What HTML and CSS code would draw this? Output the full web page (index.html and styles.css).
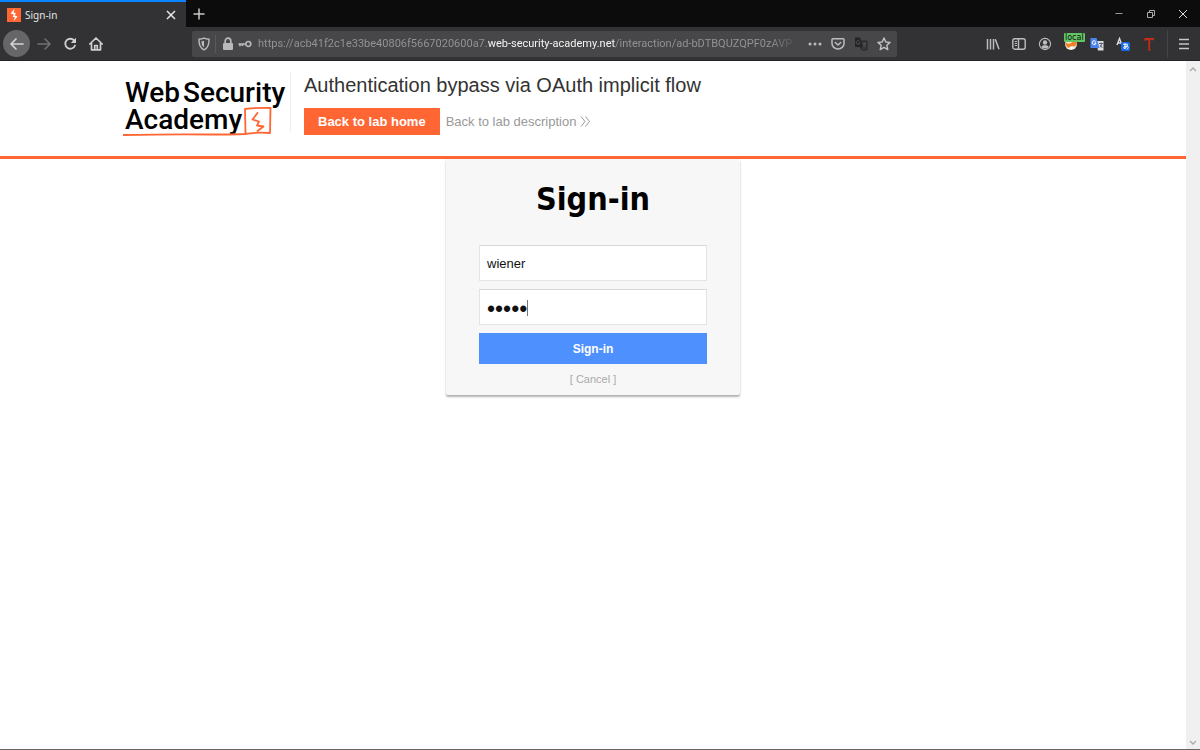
FILE: index.html
```html
<!DOCTYPE html>
<html lang="en">
<head>
<meta charset="utf-8">
<title>Sign-in</title>
<link rel="stylesheet" href="styles.css">
</head>
<body>
<div class="tabstrip">
  <div class="tab">
    <svg class="favicon" width="14" height="14" viewBox="0 0 14 14"><rect width="14" height="14" fill="#ff6633"/><path d="M7.6 0.5 L3.6 5.5 L6.8 6.5 L5.6 9 L8 9.2 L6.4 13.5 L10.6 8.4 L7.8 7.4 L8.8 5 L6.6 4.6 Z" fill="#fff"/></svg>
    <span class="tab-title">Sign-in</span>
    <button class="plain" aria-label="Close tab"><svg width="10" height="10" viewBox="0 0 10 10"><path d="M1 1 L9 9 M9 1 L1 9" stroke="#e8e8e8" stroke-width="1.5"/></svg></button>
  </div>
  <button class="plain new-tab" aria-label="New tab"><svg width="12" height="12" viewBox="0 0 12 12"><path d="M6 0.5V11.5M0.5 6H11.5" stroke="#c8c8c8" stroke-width="1.5"/></svg></button>
  <div class="window-buttons">
    <button class="plain" aria-label="Minimize"><svg width="10" height="10" viewBox="0 0 10 10"><path d="M1.500 4.500H8.500" stroke="#999"/></svg></button>
    <button class="plain" aria-label="Restore"><svg width="10" height="10" viewBox="0 0 10 10" fill="none" stroke="#aaa"><path d="M1.500 3.500H6.500V8.500H1.500ZM3.500 3.500V1.500H8.500V6.500H6.500"/></svg></button>
    <button class="plain" aria-label="Close"><svg width="10" height="10" viewBox="0 0 10 10"><path d="M1 1 L9 9 M9 1 L1 9" stroke="#ddd"/></svg></button>
  </div>
</div>

<div class="toolbar">
  <div class="nav">
    <button class="plain back" aria-label="Back"><svg width="16" height="14" viewBox="0 0 16 14" fill="none" stroke="#d4d4d5" stroke-width="1.700" stroke-linecap="round" stroke-linejoin="round"><path d="M14 7H2M7 2L2 7L7 12"/></svg></button>
    <button class="plain" aria-label="Forward"><svg width="16" height="14" viewBox="0 0 16 14" fill="none" stroke="#717173" stroke-width="1.500" stroke-linecap="round" stroke-linejoin="round"><path d="M2 7H14M9 2L14 7L9 12"/></svg></button>
    <button class="plain" aria-label="Reload"><svg width="16" height="16" viewBox="0 0 16 16"><path d="M12.500 5A5 5 0 1 0 13 9.500" fill="none" stroke="#cfcfd0" stroke-width="1.800" stroke-linecap="round"/><path d="M14 1.800V7H8.800Z" fill="#cfcfd0"/></svg></button>
    <button class="plain" aria-label="Home"><svg width="16" height="16" viewBox="0 0 16 16" fill="none" stroke="#cfcfd0" stroke-width="1.700" stroke-linejoin="round" stroke-linecap="round"><path d="M1.800 8L8 2L14.200 8M3.500 7V13.800H12.500V7M6.700 13.500V9.500H9.300V13.500"/></svg></button>
  </div>
  <div class="address">
    <svg width="14" height="14" viewBox="0 0 14 14"><path d="M7 1.200C8.800 2 10.500 2.200 12 2.200C12.200 7 11.300 10.800 7 12.800C2.700 10.800 1.800 7 2 2.200C3.500 2.200 5.200 2 7 1.200Z" fill="none" stroke="#bdbdbe" stroke-width="1.400"/><path d="M7 3.700V10.300C5 9 4.400 7.200 4.400 4.300C5.400 4.200 6.200 4 7 3.700Z" fill="#bdbdbe"/></svg>
    <span class="divider"></span>
    <svg width="12" height="14" viewBox="0 0 12 14"><rect x="1" y="6" width="10" height="7" rx="1" fill="#b9b9ba"/><path d="M3.200 6.500V4A2.800 2.800 0 0 1 8.800 4V6.500" fill="none" stroke="#b9b9ba" stroke-width="1.700"/></svg>
    <svg class="key" width="14" height="8" viewBox="0 0 14 8" fill="none" stroke="#b9b9ba" stroke-width="1.700"><circle cx="10.300" cy="4" r="2.500"/><path d="M8 4H0.500M2 4V6.300M4.500 4V6"/></svg>
    <div class="url" role="textbox" aria-label="Address">https://acb41f2c1e33be40806f5667020600a7.<span class="domain">web-security-academy.net</span>/interaction/ad-bDTBQUZQPF0zAVP</div>
    <button class="plain" aria-label="Page actions"><svg width="14" height="14" viewBox="0 0 14 14" fill="#bbb"><circle cx="2" cy="7" r="1.500"/><circle cx="7" cy="7" r="1.500"/><circle cx="12" cy="7" r="1.500"/></svg></button>
    <button class="plain" aria-label="Save to Pocket"><svg width="14" height="14" viewBox="0 0 14 14" fill="none" stroke="#bdbdbe" stroke-width="1.500" stroke-linecap="round" stroke-linejoin="round"><path d="M1.800 1.800H12.200Q13 1.800 13 2.600V6.500A6 5.500 0 0 1 1 6.500V2.600Q1 1.800 1.800 1.800ZM4.300 5.500L7 8L9.700 5.500"/></svg></button>
    <button class="plain" aria-label="Translate page"><svg width="14" height="14" viewBox="0 0 14 14"><path d="M1 0.500H6L9 10H1Z" fill="#242426"/><path d="M6.800 4H13V13H8L6 10H9Z" fill="#39393b" stroke="#29292b"/><path d="M5.600 4.300A1.900 1.900 0 1 0 6 6H4.200M8.500 6.500H12M10.300 5.500V6.500M11.300 6.500Q10.500 9 8.900 9.800M9 7.500L11.700 10" fill="none" stroke="#555558" stroke-width="0.800"/></svg></button>
    <button class="plain" aria-label="Bookmark"><svg width="14" height="14" viewBox="0 0 14 14" fill="none" stroke="#c4c4c5" stroke-width="1.400" stroke-linejoin="round"><path d="M7 1L8.800 5L13 5.400L9.800 8.200L10.800 12.600L7 10.300L3.200 12.600L4.200 8.200L1 5.400L5.200 5Z"/></svg></button>
  </div>
  <div class="tools">
    <button class="plain" aria-label="Library"><svg width="14" height="14" viewBox="0 0 14 14" stroke="#bdbdbe" stroke-width="1.500"><path d="M1.500 2V12.500M4.500 2V12.500M7.500 2V12.500M9.300 2.200L13 12.300"/></svg></button>
    <button class="plain" aria-label="Sidebars"><svg width="14" height="14" viewBox="0 0 14 14" fill="none" stroke="#bdbdbe" stroke-width="1.400"><rect x="0.800" y="1.800" width="12.400" height="10.400" rx="2"/><path d="M6.500 2V12"/><path d="M2.700 4.500H5M2.700 6.500H5M2.700 8.500H5" stroke-width="1"/></svg></button>
    <button class="plain" aria-label="Account"><svg width="14" height="14" viewBox="0 0 14 14"><circle cx="7" cy="7" r="5.600" fill="none" stroke="#bdbdbe" stroke-width="1.100"/><circle cx="7" cy="5.500" r="2.200" fill="#bdbdbe"/><path d="M3.200 10Q4 7.800 7 8.300Q10 7.800 10.800 10Q7 13 3.200 10Z" fill="#bdbdbe"/></svg></button>
    <button class="plain proxy" aria-label="Proxy"><svg width="14" height="14" viewBox="0 0 14 14"><circle cx="7" cy="7" r="6" fill="#f3e7d8"/><path d="M1.300 5Q4 8 7 6Q10 3 13 5Q12.500 9 10 9.500Q7 8 5 11Q1 9 1.300 5Z" fill="#ee8226"/><path d="M5 11Q7 9 9 11Q7 13 5 11" fill="#fff"/></svg><span class="badge">local</span></button>
    <button class="plain" aria-label="Google Translate"><svg width="14" height="14" viewBox="0 0 14 14"><path d="M6 4H13.500V13.500H8Z" fill="#dedede"/><path d="M0.500 1H6.500L9.500 11H0.500Z" fill="#4b84ee"/><path d="M5.700 4.600A1.900 1.900 0 1 0 6 6H4.300" fill="none" stroke="#fff"/><path d="M9 6.500H13M11 5.500V6.500M12 6.500Q11.500 9 9.800 10M10 8L12.500 11" fill="none" stroke="#5a6470"/></svg></button>
    <button class="plain" aria-label="Language tool"><svg width="14" height="14" viewBox="0 0 14 14"><path d="M1 8L3.500 1.500L6 8M2 6H5" fill="none" stroke="#ddd" stroke-width="1.400"/><rect x="5" y="5" width="9" height="9" rx="1.500" fill="#1769e0"/><path d="M7 7.300H12M9 6V12M11.500 8Q10 12 8 11.500Q6.500 10.500 9 9.300Q12.500 8.500 12.300 10.500Q12 12 10.500 12.300" fill="none" stroke="#fff" stroke-width="0.900"/></svg></button>
    <button class="plain" aria-label="Tamper tool"><svg width="14" height="14" viewBox="0 0 14 14"><path d="M2.500 1H12L11.500 3.500L8.200 2.500L8 12L9 13.500H5.500L6.500 12L6.300 2.800L2.500 4Z" fill="#c92d17"/></svg></button>
  </div>
  <button class="plain menu" aria-label="Menu"><svg width="12" height="12" viewBox="0 0 12 12"><path d="M1 1.500H11M1 6H11M1 10.500H11" stroke="#c6c6c7" stroke-width="1.500"/></svg></button>
</div>

<div class="viewport">
  <div class="page">
    <header class="lab-header">
      <div class="lab-inner">
        <div class="logo">
          <div class="logo-line"><span>Web</span><span>Security</span></div>
          <div class="logo-line">Academy</div>
          <svg class="logo-mark" width="164" height="60" viewBox="0 0 164 60" fill="none" stroke="#ff6633" stroke-linejoin="round" stroke-linecap="round"><path d="M0.500 57Q50 56 88 56.500Q108 56.500 122 56M122.500 56L122 31Q134 29.500 147.500 30L147 55Q134 54 122 56" stroke-width="1.800"/><path d="M134.500 35L129.500 41.500L136 43.500L134 47.500L140.500 48.500L134.500 53" stroke-width="1.800"/></svg>
        </div>
        <div class="lab-info">
          <h2>Authentication bypass via OAuth implicit flow</h2>
          <div class="lab-links">
            <a class="home-button" href="#">Back to lab home</a>
            <a class="description-link" href="#">Back to lab description <svg width="11" height="11" viewBox="0 0 11 11" fill="none" stroke="#999"><path d="M1 0.500L5 5.500L1 10.500M5.500 0.500L9.500 5.500L5.500 10.500"/></svg></a>
          </div>
        </div>
      </div>
    </header>
    <main class="card">
      <h1>Sign-in</h1>
      <form>
        <input class="field" type="text" aria-label="Login" value="wiener">
        <div class="password">
          <input class="field" type="password" aria-label="Password" value="peter">
          <span class="caret"></span>
        </div>
        <button class="submit" type="button">Sign-in</button>
      </form>
      <div class="cancel">[ <a href="#">Cancel</a> ]</div>
    </main>
  </div>
  <div class="scrollbar">
    <svg width="8" height="6" viewBox="0 0 8 6"><path d="M1 5L4 2L7 5" fill="none" stroke="#aaa" stroke-width="1.300"/></svg>
    <svg width="8" height="6" viewBox="0 0 8 6"><path d="M1 1L4 4L7 1" fill="none" stroke="#aaa" stroke-width="1.300"/></svg>
  </div>
</div>
</body>
</html>
```
FILE: styles.css
```css
* { box-sizing: border-box; }
body {
  margin: 0;
  min-height: 100vh;
  display: flex;
  flex-direction: column;
  background: #fff;
  font-family: "Liberation Sans", Arial, sans-serif;
}
svg { display: block; flex: none; }
.plain {
  display: flex;
  align-items: center;
  justify-content: center;
  padding: 0;
  border: 0;
  background: none;
  color: inherit;
}

.tabstrip {
  display: flex;
  align-items: stretch;
  height: 27px;
  background: #0c0c0d;
}
.tab {
  display: flex;
  align-items: center;
  width: 186px;
  padding: 0 10px 0 7px;
  border-top: 2px solid #0a84ff;
  background: #323234;
}
.tab-title {
  flex: 1;
  margin-left: 4px;
  font: 10px "Noto Sans", sans-serif;
  color: #e6e6e6;
}
.new-tab { width: 26px; }
.window-buttons {
  display: flex;
  gap: 22px;
  margin-left: auto;
  padding-right: 12px;
}

.toolbar {
  display: flex;
  align-items: center;
  height: 34px;
  padding: 0 10px 0 3px;
  background: #323234;
  border-bottom: 1px solid #242426;
}
.nav {
  display: flex;
  align-items: center;
  gap: 10px;
  width: 189px;
}
.nav .back {
  width: 27px;
  height: 27px;
  margin-right: -4px;
  border-radius: 50%;
  background: #666668;
}
.address {
  display: flex;
  align-items: center;
  flex: 0 1 705px;
  min-width: 0;
  height: 26px;
  padding: 0 6px 0 5px;
  gap: 9px;
  border-radius: 2px;
  background: #474749;
}
.divider {
  width: 1px;
  height: 18px;
  margin: 0 -3px 0 -5px;
  background: #59595b;
}
.key { margin-left: -5px; }
.url {
  flex: 1;
  min-width: 0;
  margin-left: -3px;
  overflow: hidden;
  white-space: nowrap;
  font: 11px/20px Roboto, sans-serif;
  color: #929293;
  -webkit-mask-image: linear-gradient(to left, transparent, #000 30px);
  mask-image: linear-gradient(to left, transparent, #000 30px);
}
.domain { color: #f4f4f4; }
.tools {
  display: flex;
  align-items: center;
  gap: 12px;
  margin-left: auto;
  padding-right: 11px;
}
.proxy { position: relative; }
.badge {
  position: absolute;
  top: -4px;
  left: 0;
  padding: 0 1px;
  border-radius: 1px;
  background: #62c462;
  color: #111;
  font: 8px/9px "DejaVu Sans", sans-serif;
}
.menu {
  height: 28px;
  padding-left: 10px;
  border-left: 1px solid #454547;
}

.viewport {
  flex: 1;
  display: flex;
  border-bottom: 1px solid #666;
}
.page { flex: 1; min-width: 0; }
.scrollbar {
  display: flex;
  flex-direction: column;
  align-items: center;
  justify-content: space-between;
  width: 14px;
  padding: 5px 0 3px;
  background: #f0f0f0;
}

.lab-header {
  height: 98px;
  border-bottom: 3px solid #ff6633;
}
.lab-inner {
  display: flex;
  max-width: 940px;
  margin: 0 auto;
  padding-top: 11px;
}
.logo {
  position: relative;
  width: 168px;
  height: 60px;
  padding: 7px 0 0 2px;
  border-right: 1px solid #eee;
  font: 500 28px/27px Roboto, sans-serif;
  color: #000;
  white-space: nowrap;
}
.logo-line { display: flex; gap: 3px; }
.logo-mark { position: absolute; left: 0; top: 6px; }
.lab-info { padding-left: 13px; }
.lab-info h2 {
  margin: 0;
  font-size: 20px;
  font-weight: 400;
  line-height: 26px;
  color: #333332;
}
.lab-links {
  display: flex;
  align-items: center;
  gap: 6px;
  margin-top: 10px;
  font-size: 13px;
}
.home-button {
  padding: 0 14px;
  background: #ff6633;
  color: #fff;
  font-weight: 700;
  line-height: 27px;
  text-decoration: none;
}
.description-link {
  display: flex;
  align-items: center;
  gap: 4px;
  color: #999;
  text-decoration: none;
}

.card {
  width: 294px;
  margin: 0 auto;
  padding: 18px 33px 8px;
  border-radius: 0 0 2px 2px;
  background: #f7f7f7;
  box-shadow: 0 2px 2px rgba(0, 0, 0, 0.3);
}
.card h1 {
  margin: 0 0 24px;
  font: 700 32px/44px "DejaVu Sans Condensed", "DejaVu Sans", sans-serif;
  text-align: center;
  color: #000;
}
.card form {
  display: flex;
  flex-direction: column;
  gap: 8px;
}
.field {
  display: block;
  width: 100%;
  height: 36px;
  padding: 0 7px;
  border: 1px solid #e4e4e4;
  border-top-color: #d6d6d6;
  border-radius: 0;
  background: #fff;
  color: #111;
  font: 13px "Liberation Sans", Arial, sans-serif;
  outline: none;
}
.password { position: relative; }
.password .field { padding-top: 4px; font-size: 23px; }
.caret {
  position: absolute;
  left: 48px;
  top: 11px;
  width: 1px;
  height: 16px;
  background: #777;
}
.submit {
  height: 31px;
  border: 0;
  background: #4d90fe;
  color: #fff;
  font: 700 12px "Liberation Sans", Arial, sans-serif;
}
.cancel {
  margin-top: 7px;
  font: 11px/16px "Liberation Sans", Arial, sans-serif;
  text-align: center;
  color: #aaa;
}
.cancel a { color: inherit; text-decoration: none; }
```
